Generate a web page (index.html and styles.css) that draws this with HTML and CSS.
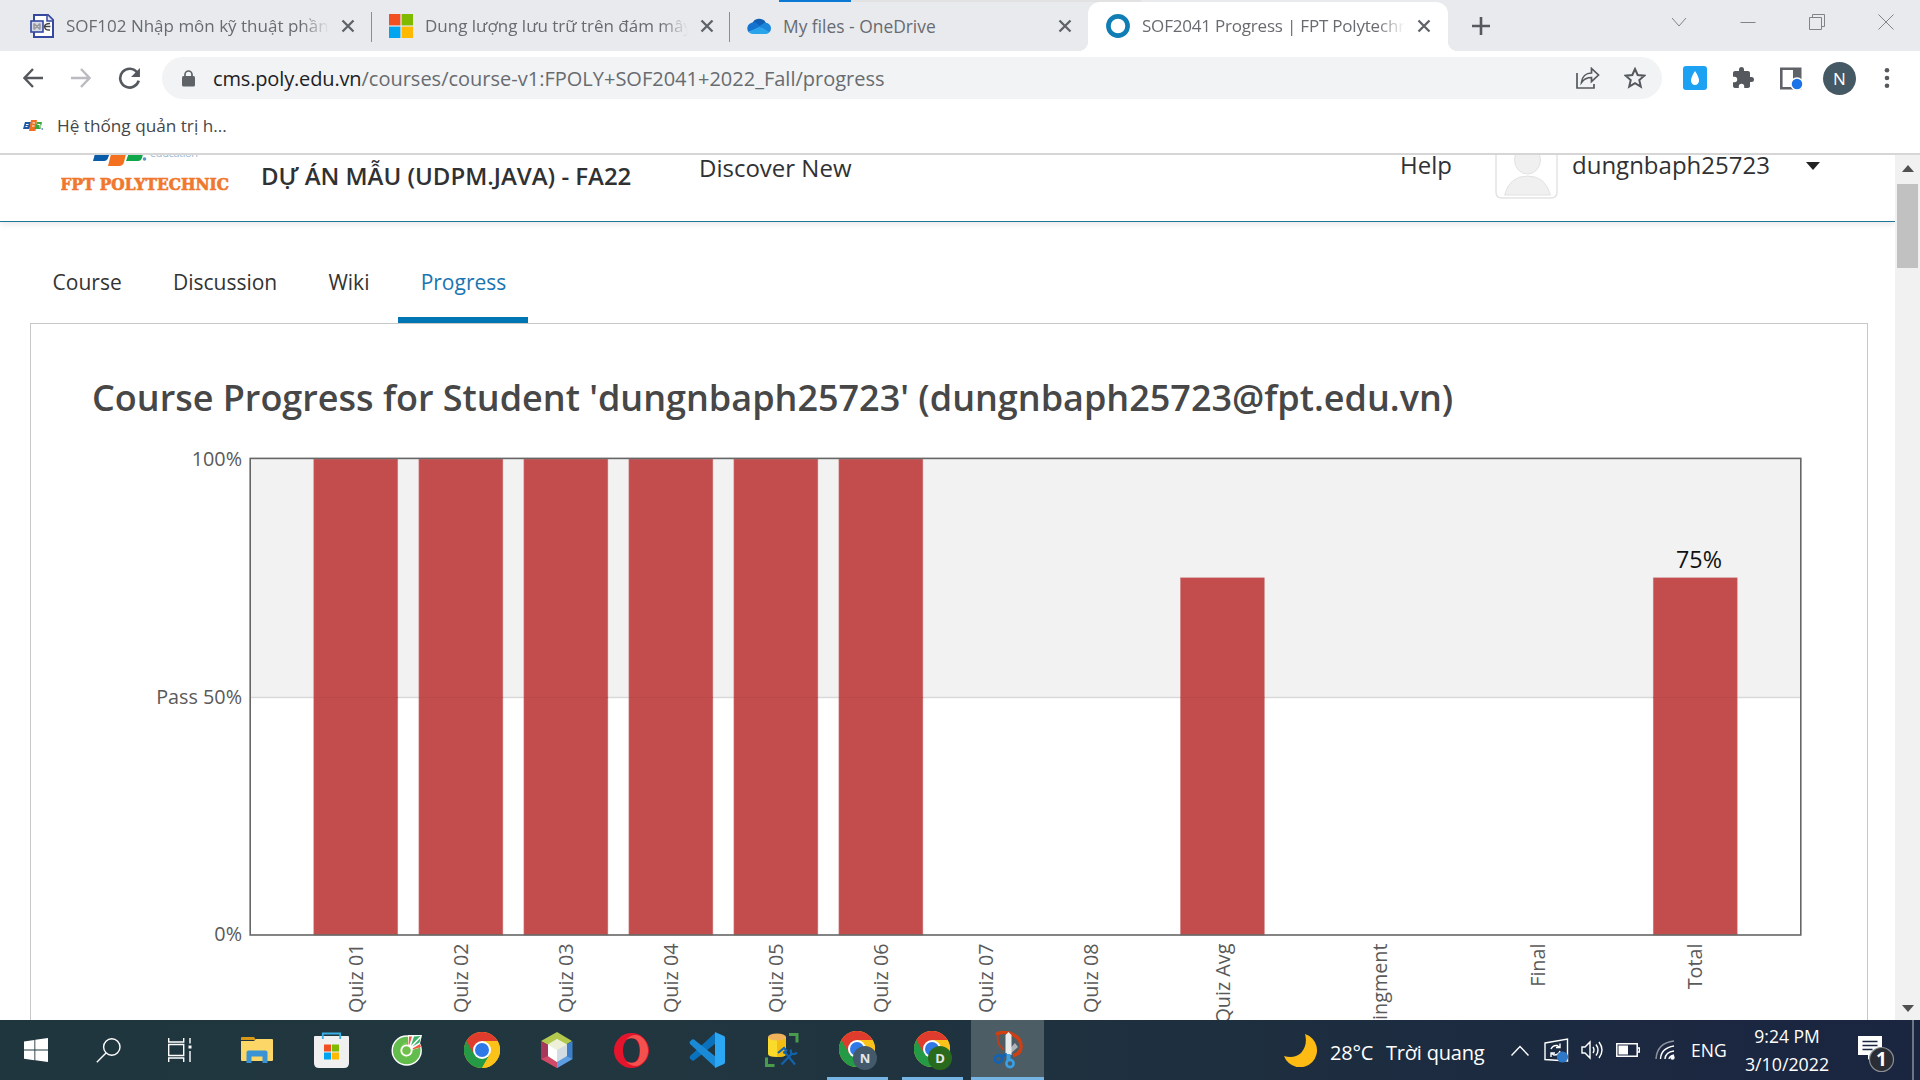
FILE: index.html
```html
<!DOCTYPE html>
<html lang="vi">
<head>
<meta charset="utf-8">
<title>SOF2041 Progress | FPT Polytechnic</title>
<link rel="stylesheet" href="styles.css">
</head>
<body>
<svg width="0" height="0" class="defs" aria-hidden="true">
  <defs>
    <symbol id="x" viewBox="0 0 14 14"><path d="M1.5 1.5l11 11M12.500 1.500l-11 11" stroke="#5f6368" stroke-width="2.300" fill="none"/></symbol>
    <symbol id="chrome" viewBox="0 0 36 36">
      <circle cx="18" cy="18" r="18" fill="#fbc21a"/>
      <path d="M18 18 L2.400 9 A18 18 0 0 0 18 36 L26 22Z" fill="#249a46"/>
      <path d="M2.400 9 A18 18 0 0 1 33.600 9 L18 9.300 L10 22Z" fill="#e03c2e"/>
      <path d="M33.600 9H18l7.800 13.500L18 36A18 18 0 0 0 33.600 9Z" fill="#fbc21a"/>
      <circle cx="18" cy="18" r="9" fill="#fff"/><circle cx="18" cy="18" r="7" fill="#2f78e8"/>
    </symbol>
  </defs>
</svg>

<div class="tabstrip">
  <div class="progress-blue"></div><div class="progress-grey"></div>
  <div class="tab tab-a">
    <svg class="fav" viewBox="0 0 24 24"><path d="M4 1h14l5 5v17H4z" fill="#fff" stroke="#3549a0" stroke-width="2"/><path d="M17 1v6h6" fill="#dfe3f3" stroke="#3549a0" stroke-width="1.500"/><rect x="1" y="7" width="12" height="11" fill="#d5daea" stroke="#3549a0" stroke-width="1.600"/><path d="M4 9.500l6 6M10 9.500l-6 6M4 9.500v6M10 9.500v6" stroke="#999" stroke-width="1.500"/><path d="M20 9.500q-5 0-5.500 3 .5 4 5.500 3.500M14.500 12.500h6" stroke="#444" stroke-width="1.500" fill="none"/></svg>
    <span class="tab-text fade">SOF102 Nhập môn kỹ thuật phần mềm</span>
    <svg class="close"><use href="#x"/></svg>
  </div>
  <div class="tab tab-b">
    <svg class="fav" viewBox="0 0 24 24"><path fill="#f25022" d="M0 0h11.400v11.400H0z"/><path fill="#7fba00" d="M12.600 0H24v11.400H12.600z"/><path fill="#00a4ef" d="M0 12.600h11.400V24H0z"/><path fill="#ffb900" d="M12.600 12.600H24V24H12.600z"/></svg>
    <span class="tab-text fade">Dung lượng lưu trữ trên đám mây</span>
    <svg class="close"><use href="#x"/></svg>
  </div>
  <div class="tab tab-c">
    <svg class="fav" viewBox="0 0 24 24"><path d="M5 10a7.500 7.500 0 0 1 14-1l-6 6z" fill="#0f5fb5"/><path d="M5.500 8.500A6 6 0 0 0 1.500 18l13-5-5-4q-2-1-4-.500z" fill="#1373cf"/><path d="M24 14.500a5.500 5.500 0 0 0-7-5.500l-5 3.500 10 6q2-1.500 2-4z" fill="#1a86dc"/><path d="M1.500 18l11-5.200L22.500 18a5 5 0 0 1-3.500 2H6a6 6 0 0 1-4.500-2z" fill="#29a3ea"/></svg>
    <span class="tab-text">My files - OneDrive</span>
    <svg class="close"><use href="#x"/></svg>
  </div>
  <div class="tab tab-d">
    <svg class="fav" viewBox="0 0 24 24"><circle cx="12" cy="12" r="9.600" fill="#fff" stroke="#107eb4" stroke-width="4.600"/></svg>
    <span class="tab-text fade">SOF2041 Progress | FPT Polytechnic</span>
    <svg class="close"><use href="#x"/></svg>
  </div>
  <svg class="plus" viewBox="0 0 18 18"><path d="M9 0v18M0 9h18" stroke="#55595e" stroke-width="2.600"/></svg>
  <div class="winbtns">
    <svg viewBox="0 0 16 16"><path d="M1 4l7 8 7-8" /></svg>
    <svg viewBox="0 0 16 16"><path d="M0.500 8.500h15"/></svg>
    <svg viewBox="0 0 16 16"><path d="M.5 3.500h12v12H.5zM3.500 3.500v-3h12v12h-3"/></svg>
    <svg viewBox="0 0 16 16"><path d="M.5.500l15 15M15.500.500l-15 15"/></svg>
  </div>
</div>

<div class="toolbar">
  <svg class="ic back" viewBox="0 0 20 20"><path d="M20 10H2M10 1L1.500 10 10 19" fill="none" stroke="#55595e" stroke-width="2.400"/></svg>
  <svg class="ic fwd" viewBox="0 0 20 20"><path d="M0 10h18M10 1l8.500 9-8.500 9" fill="none" stroke="#b9bbbe" stroke-width="2.400"/></svg>
  <svg class="ic reload" viewBox="0 0 22 22"><path d="M18.500 5.500A9 9 0 1 0 19.800 13" fill="none" stroke="#55595e" stroke-width="2.500"/><path d="M21 1v8.500h-8.500z" fill="#55595e"/></svg>
  <div class="omnibox">
    <svg class="lock" viewBox="0 0 13 16"><rect y="5.500" width="13" height="10.500" rx="1.500" fill="#5f6368"/><path d="M3 6V4a3.500 3.500 0 0 1 7 0v2" fill="none" stroke="#5f6368" stroke-width="1.700"/></svg>
    <span class="url"><span class="host">cms.poly.edu.vn</span><span>/courses/course-v1:FPOLY+SOF2041+2022_Fall/progress</span></span>
    <svg class="share" viewBox="0 0 24 22"><path d="M1 6v15h17v-4" fill="none" stroke="#55595e" stroke-width="1.700"/><path d="M5.500 15.500C6 9.500 10 6 15.500 6V1.500L22.500 8l-7 6.500V10.500C11 10.500 8 12 5.500 15.500z" fill="none" stroke="#55595e" stroke-width="1.700"/></svg>
    <svg class="star" viewBox="0 0 22 22"><path d="M11 2l2.700 6 6.600.700-5 4.400 1.500 6.500L11 16.200l-5.800 3.400 1.500-6.500-5-4.400L8.300 8z" fill="none" stroke="#55595e" stroke-width="2"/></svg>
  </div>
  <svg class="drop" viewBox="0 0 24 24"><rect width="24" height="24" rx="3" fill="#1da1f2"/><path d="M12 5q4 6 4 9.500a4 4.500 0 0 1-8 0Q8 11 12 5z" fill="#fff"/></svg>
  <svg class="puzzle" viewBox="0 0 24 24"><path d="M20.500 11H19V7c0-1.100-.9-2-2-2h-4V3.500a2.500 2.500 0 0 0-5 0V5H4c-1.100 0-2 .9-2 2v3.800h1.500a2.700 2.700 0 0 1 0 5.400H2V20c0 1.100.9 2 2 2h3.800v-1.500a2.700 2.700 0 0 1 5.400 0V22H17c1.100 0 2-.9 2-2v-4h1.500a2.500 2.500 0 0 0 0-5z" fill="#55595e"/></svg>
  <svg class="side" viewBox="0 0 23 22"><path d="M1.300 1.300h18.900v19.400H1.300z" fill="#fff" stroke="#5f6368" stroke-width="2.600"/><path d="M13 1h8v12h-8z" fill="#5f6368"/><circle cx="17" cy="16.500" r="6" fill="#1a73e8" stroke="#fff" stroke-width="1.500"/></svg>
  <div class="avatar-n">N</div>
  <svg class="dots" viewBox="0 0 6 20"><circle cx="3" cy="2.300" r="2.300"/><circle cx="3" cy="10" r="2.300"/><circle cx="3" cy="17.700" r="2.300"/></svg>
</div>

<div class="bookmarks">
  <svg class="bm" viewBox="0 0 20 12"><path d="M2 2h6l-1.500 7H0z" fill="#1d5aa8"/><path d="M8 0h6l-1.500 11H6z" fill="#f36f21"/><path d="M14 2h5l-1.500 7h-6z" fill="#3aa63f"/><path d="M3 4.500h2.500M2.500 6.500h2M9.500 3h2.500M9 6h2.500M14.500 4.500h2.500v3" stroke="#fff" stroke-width="1" fill="none"/><circle cx="19.200" cy="9" r=".8" fill="#1d5aa8"/></svg>
  <span class="bm-text">Hệ thống quản trị h...</span>
</div>

<div class="viewport">
  <div class="page">
    <header class="site-header">
      <svg class="logo" viewBox="61 155 169 40"><path d="M96 150h15l-3 8q-1 3-4 3H93z" fill="#0a5ba8"/><path d="M112 150h15l-3 12q-1 4-5 4h-11z" fill="#f3701f"/><path d="M130 150h14l-2 8q-1 3-4 3h-12z" fill="#10a64a"/><circle cx="144.500" cy="159" r="1.800" fill="#5d93c8"/><text x="150" y="156.500" class="edu" textLength="48">education</text><text x="60.500" y="189.500" class="poly" textLength="168.500" lengthAdjust="spacingAndGlyphs">FPT POLYTECHNIC</text></svg>
      <span class="course-name">DỰ ÁN MẪU (UDPM.JAVA) - FA22</span>
      <span class="discover">Discover New</span>
      <span class="help">Help</span>
      <svg class="user-pic" viewBox="0 0 64 46"><path d="M1 0v37q0 6 6 6h49q6 0 6-6V0" fill="#fff" stroke="#e3e3e3" stroke-width="1.500"/><ellipse cx="32.500" cy="5" rx="13" ry="14" fill="#f0f0f0" stroke="#e2e2e2"/><path d="M9.500 40q5-19 23-19t23 19z" fill="#f0f0f0" stroke="#e2e2e2"/></svg>
      <span class="username">dungnbaph25723</span>
      <svg class="caret" viewBox="0 0 14 8"><path d="M0 0h14L7 8z" fill="#222"/></svg>
    </header>
    <nav class="course-nav">
      <a>Course</a><a>Discussion</a><a>Wiki</a><a class="on">Progress</a>
    </nav>
    <main class="panel">
      <h1>Course Progress for Student 'dungnbaph25723' (dungnbaph25723@fpt.edu.vn)</h1>
      <svg class="chart" viewBox="31 420 1836 600">
        <rect x="251" y="459" width="1549" height="238" fill="#f2f2f2"/>
        <path d="M251 697.500h1549" stroke="#d9d9d9" stroke-width="1.500"/>
        <g class="bars">
          <rect x="313.800" y="459" width="84" height="476"/><rect x="418.900" y="459" width="84" height="476"/><rect x="523.900" y="459" width="84" height="476"/><rect x="628.900" y="459" width="84" height="476"/><rect x="733.900" y="459" width="84" height="476"/><rect x="838.900" y="459" width="84" height="476"/><rect x="1180.400" y="577.800" width="84" height="357.200"/><rect x="1653.200" y="577.800" width="84" height="357.200"/>
        </g>
        <path d="M314 697.500h84M419 697.500h84M524 697.500h84M629 697.500h84M734 697.500h84M839 697.500h84M1180.500 697.500h84M1653 697.500h84" stroke="#b94a4a" stroke-width="1"/>
        <rect x="250.200" y="458.400" width="1550.600" height="476.600" class="frame"/>
        <g class="ylab"><text x="242" y="466">100%</text><text x="242" y="704">Pass 50%</text><text x="242" y="941">0%</text></g>
        <g class="xlab">
          <text transform="translate(363 943.500) rotate(-90)">Quiz 01</text><text transform="translate(468 943.500) rotate(-90)">Quiz 02</text><text transform="translate(573 943.500) rotate(-90)">Quiz 03</text><text transform="translate(678 943.500) rotate(-90)">Quiz 04</text><text transform="translate(783 943.500) rotate(-90)">Quiz 05</text><text transform="translate(888 943.500) rotate(-90)">Quiz 06</text><text transform="translate(993 943.500) rotate(-90)">Quiz 07</text><text transform="translate(1098 943.500) rotate(-90)">Quiz 08</text><text transform="translate(1230 943.500) rotate(-90)">Quiz Avg</text><text transform="translate(1387 943.500) rotate(-90)">Assingment</text><text transform="translate(1545 943.500) rotate(-90)">Final</text><text transform="translate(1702 943.500) rotate(-90)">Total</text>
        </g>
        <text x="1699" y="568" class="total">75%</text>
      </svg>
    </main>
  </div>
  <div class="scrollbar">
    <svg viewBox="0 0 12 7"><path d="M0 7h12L6 0z"/></svg>
    <div class="thumb"></div>
    <svg class="down" viewBox="0 0 12 7"><path d="M0 0h12L6 7z"/></svg>
  </div>
</div>

<div class="taskbar">
  <div class="tb sys"><svg width="24" height="24" viewBox="0 0 24 24"><path fill="#fff" d="M0 3.400l10.400-1.500v9.600H0zM11.300 1.700L24 0v11.500H11.300zM0 12.500h10.400v9.700L0 20.700zM11.300 12.500H24V24l-12.700-1.700z"/></svg></div>
  <div class="tb sys"><svg width="25" height="25" viewBox="0 0 25 25" class="line"><circle cx="15.800" cy="9" r="8.200"/><path d="M10 15L.8 24.200"/></svg></div>
  <div class="tb sys"><svg width="24" height="24" viewBox="0 0 24 24" class="line"><path d="M.7 0v4h15V0M.7 24v-4h15v4M.7 6.500h15v11H.7zM22 0v5.500M22 13v11"/><path d="M20.500 7.500h3v3h-3z" fill="#fff" stroke="none"/></svg></div>
  <div class="tb gap"><svg width="32" height="28" viewBox="0 0 32 28"><path d="M0 2q0-1 1-1h12l2 3H0z" fill="#d79a18"/><path d="M0 5h13l2-2h16q1 0 1 1v20q0 1-1 1H1q-1 0-1-1z" fill="#fcd667"/><path d="M5.500 27V16.500q0-2 2-2h17q2 0 2 2V27h-5v-6.500h-11V27z" fill="#3a93d4"/></svg></div>
  <div class="tb"><svg width="35" height="36" viewBox="0 0 35 36"><path d="M8.800 7V1.500h17.400V7" fill="none" stroke="#38b0e3" stroke-width="1.800"/><path d="M0 5q0-1 1-1h33q1 0 1 1v26q0 5-5 5H5q-5 0-5-5z" fill="#f0f0f1"/><path d="M8.800 4v3M26.200 4v3" stroke="#38b0e3" stroke-width="1.800"/><path fill="#f25022" d="M10 12.500h7v7h-7z"/><path fill="#7fba00" d="M18 12.500h7v7h-7z"/><path fill="#00a4ef" d="M10 20.500h7v7h-7z"/><path fill="#ffb900" d="M18 20.500h7v7h-7z"/></svg></div>
  <div class="tb"><svg width="32" height="32" viewBox="0 0 32 32"><circle cx="15.700" cy="16.500" r="14.500" fill="#62bd4c" stroke="#fff" stroke-width="1.400"/><path d="M17 14V1h14l-3 13-7 2z" fill="#fff"/><path d="M18 2.500h3l-2.500 8h-1zM29 10l1 3-8 2.500-.5-1z" fill="#ee5a42"/><path d="M23 2.500l6.500-.5L20 11.500zM29.500 4l-1 4.500-7 4z" fill="#3db266"/><path d="M16 24a8 8 0 0 1-7-8 8 8 0 0 1 7-8" fill="#7cc850"/><circle cx="15.500" cy="16.500" r="5.200" fill="#6fbf4a" stroke="#fff" stroke-width="1.800"/></svg></div>
  <div class="tb"><svg width="36" height="36"><use href="#chrome"/></svg></div>
  <div class="tb"><svg width="32" height="36" viewBox="0 0 32 36"><path d="M16 0l15 9-15 9L0 9z" fill="#b2c94d"/><path d="M0 9v18l16 9V18z" fill="#a8375a"/><path d="M31.500 9v18L16 36V18z" fill="#3c7fc9"/><path d="M0 27l16 9v-7l-9-5z" fill="#d24a68"/><path d="M31.500 27L16 36v-7l9-5z" fill="#5e9ee0"/><path d="M16 7l10 5.500V24l-10 6-9-6V12.500z" fill="#d3dce2"/><path d="M16 7l10 5.500L16 18l-9-5.500z" fill="#eef1d8"/><path d="M7 12.500L16 18v12l-9-6z" fill="#fff"/></svg></div>
  <div class="tb wide"><svg width="35" height="35" viewBox="0 0 35 35"><path fill-rule="evenodd" fill="#e3142c" d="M17.500 0a17.500 17.500 0 1 0 0 35 17.500 17.500 0 0 0 0-35zm0 5c5 0 8 5.500 8 12.500S22.500 30 17.500 30 9 24.500 9 17.500 12.500 5 17.500 5z"/><path d="M12 6.500Q19 0 26 3a17 17 0 0 1 0 29q-7 3-14-3.500 14 5 14-11T12 6.500z" fill="#f4504e"/></svg></div>
  <div class="tb"><svg width="36" height="36" viewBox="0 0 36 36"><path d="M27 0L1 24q-1 1.500 0 2.500l2 2q1 .5 2 0L27 11z" fill="#0a72bd"/><path d="M27 36L1 12q-1-1.500 0-2.500l2-2q1-.5 2 0L27 25z" fill="#1a8ad6"/><path d="M26 0l9 4q1 .5 1 2v24q0 1.500-1 2l-9 4z" fill="#2ba7f4"/></svg></div>
  <div class="tb"><svg width="34" height="34" viewBox="0 0 34 34"><path d="M3 4v17q0 3 9 3t9-3V4z" fill="#fadb2c"/><path d="M12 5h9v16q0 3-9 3z" fill="#f2bd12"/><ellipse cx="12" cy="4" rx="9" ry="3.500" fill="#f0b35c"/><path d="M24 1.500h8v8M1.500 24.500v8h8" fill="none" stroke="#4a9c4d" stroke-width="3"/><path d="M16.500 31.500l11-11.500M19 18l11 13.500" stroke="#1263ad" stroke-width="2.200" fill="none"/><path d="M13 20l6-5 2.500 2.500-3 3M26 16.500q-1 4 1.500 4.500t4.500-1.500" stroke="#1263ad" stroke-width="2.200" fill="none"/></svg></div>
  <div class="tb run"><svg width="40" height="40" viewBox="-1 0 40 40"><use href="#chrome" width="36" height="36"/><circle cx="26" cy="27" r="12" fill="#44596a"/><text x="26" y="32" class="badge">N</text></svg></div>
  <div class="tb run"><svg width="40" height="40" viewBox="-1 0 40 40"><use href="#chrome" width="36" height="36"/><circle cx="26" cy="27" r="12" fill="#2a6a1d"/><text x="26" y="32" class="badge">D</text></svg></div>
  <div class="tb run active"><svg width="30" height="38" viewBox="0 0 30 38"><path d="M3 3.500q6-3.500 13-1.500 12 4 12 13 0 8-8 9.500" fill="none" stroke="#d03f12" stroke-width="3.500"/><path d="M5 4q-2 9 6 15" fill="none" stroke="#b8401c" stroke-width="2"/><path d="M22 12l3 4-10 9-3-2z" fill="#aeb4b8"/><path d="M12.500 4l3-3 3 3v20h-6z" fill="#e9ebec"/><circle cx="5.500" cy="28" r="3.600" fill="none" stroke="#1263b5" stroke-width="2.600"/><circle cx="17" cy="32.500" r="3.600" fill="none" stroke="#3aa0e6" stroke-width="2.600"/><path d="M8 26l6-3" stroke="#1263b5" stroke-width="3"/><path d="M15.500 23v7" stroke="#3aa0e6" stroke-width="4"/></svg></div>
  <div class="tray">
    <svg class="moon" viewBox="0 0 33 33"><path d="M21 0A17 17 0 1 1 0 22Q10 25 17 19 24 11 21 0z" fill="#fdbb13"/></svg>
    <span class="temp">28°C</span><span class="weather">Trời quang</span>
    <svg class="chev line" viewBox="0 0 18 11"><path d="M.5 10.500L9 1.500l8.500 9"/></svg>
    <svg class="sync line" viewBox="0 0 25 25"><path d="M1 5L23.500 1v22L1 21.500z"/><path d="M7 11q2-4 6-3.500l3 2M16 5.500v4h-4M16 13q-1 4-6 4l-3-2M7 19v-4h4"/><circle cx="18.500" cy="19" r="5.600" fill="#2f78c8" stroke="none"/></svg>
    <svg class="spk line" viewBox="0 0 23 20"><path d="M1 7h3l5-5v16l-5-5H1zM12 7q2 3 0 6M15 4.500q4 5.500 0 11M18 2q6 8 0 16"/></svg>
    <svg class="bat" viewBox="0 0 24 14"><path d="M.8.800h20.400v12.400H.8zM22 5h1.500v4H22" fill="none" stroke="#fff" stroke-width="1.500"/><path d="M2.500 2.500H12v9H2.500z" fill="#fff"/></svg>
    <svg class="wifi line" viewBox="0 0 20 20"><path d="M1 19Q2 3 19 1" opacity=".5"/><path d="M5.500 19Q6 8 19 6M10 19q.5-7 9-8M14 19q.5-3 5-4"/><circle cx="17.500" cy="17.500" r="1.500" fill="#fff"/></svg>
    <span class="lang">ENG</span>
    <div class="clock"><span>9:24 PM</span><span class="date">3/10/2022</span></div>
    <svg class="notif" viewBox="0 0 38 38"><path d="M1 1h24v19H15l-4 5v-5H1z" fill="#fff"/><path d="M5.500 6.500h15M5.500 10.500h15M5.500 14.500h10" stroke="#1b2740" stroke-width="1.400"/><circle cx="24.500" cy="24.500" r="12" fill="#2a2d33" stroke="#8b8f96" stroke-width="1.200"/><text x="24.500" y="31" class="one">1</text></svg>
    <div class="peek"></div>
  </div>
</div>
</body>
</html>
```
FILE: styles.css
```css
* { box-sizing: border-box; }
body { margin: 0; width: 1920px; height: 1080px; overflow: hidden; background: #fff; font-family: "Open Sans", "Noto Sans", sans-serif; color: #333; display: flex; flex-direction: column; }
svg { display: block; flex: none; }
span, a { white-space: pre; }
.defs { position: absolute; }

.tabstrip { position: relative; height: 51px; background: #e8eaed; display: flex; align-items: center; flex: none; }
.progress-blue { position: absolute; left: 779px; top: 0; width: 72px; height: 2px; background: #0a78d4; }
.progress-grey { position: absolute; left: 851px; top: 0; width: 290px; height: 2px; background: #e2e2e2; }
.tab { display: flex; align-items: center; height: 100%; position: relative; }
.tab-a { width: 372px; padding-left: 30px; }
.tab-b { width: 358px; padding-left: 17px; }
.tab-c { width: 358px; padding-left: 17px; }
.tab-d { width: 360px; height: 49px; margin-top: 2px; padding: 0 0 2px 18px; background: #fff; border-radius: 12px 12px 0 0; }
.tab-a::after, .tab-b::after { content: ""; position: absolute; right: 0; top: 12px; width: 1px; height: 30px; background: #8a8d91; }
.tab-d::before, .tab-d::after { content: ""; position: absolute; bottom: 0; width: 10px; height: 10px; }
.tab-d::before { left: -10px; background: radial-gradient(circle at 0 0, transparent 10px, #fff 10.5px); }
.tab-d::after { right: -10px; background: radial-gradient(circle at 100% 0, transparent 10px, #fff 10.5px); }
.fav { width: 24px; height: 24px; }
.tab-text { margin-left: 12px; width: 263px; overflow: hidden; font-size: 17px; line-height: 30px; color: #686b70; }
.fade { -webkit-mask-image: linear-gradient(90deg, #000 235px, transparent 263px); mask-image: linear-gradient(90deg, #000 235px, transparent 263px); }
.close { width: 14px; height: 14px; margin-left: 12px; }
.tab-c .tab-text { font-size: 17.4px; }
.tab-d .tab-text { letter-spacing: -0.2px; }
.plus { width: 18px; height: 18px; margin-left: 23.5px; }
.winbtns { margin-left: auto; display: flex; gap: 53px; padding: 0 26px 8px 0; }
.winbtns svg { width: 16px; height: 16px; fill: none; stroke: #808388; stroke-width: 1; }

.toolbar { height: 51px; display: flex; align-items: center; flex: none; padding: 3px 0 0 23px; }
.ic { width: 20px; height: 20px; }
.fwd { margin-left: 28px; }
.reload { width: 23px; height: 23px; margin-left: 26.5px; }
.omnibox { width: 1500px; height: 42px; border-radius: 21px; background: #f1f3f4; margin-left: 21.5px; display: flex; align-items: center; padding-left: 20px; }
.lock { width: 13px; height: 17px; }
.url { margin-left: 18px; padding-top: 1px; font-size: 20px; line-height: 40px; color: #686b70; width: 1363px; display: flex; }
.host { color: #202124; letter-spacing: -0.15px; }
.share { width: 24px; height: 22px; }
.star { width: 22px; height: 22px; margin-left: 24px; }
.drop { width: 24px; height: 24px; margin-left: 21px; }
.puzzle { width: 24px; height: 24px; margin-left: 24px; }
.side { width: 23px; height: 23px; margin-left: 25px; }
.avatar-n { width: 33px; height: 33px; border-radius: 50%; background: #445964; color: #fff; font-size: 17px; line-height: 33px; text-align: center; margin-left: 20px; }
.dots { width: 6px; height: 20px; margin-left: 28px; fill: #55595e; }

.bookmarks { height: 53px; border-bottom: 2px solid #d6d6d6; display: flex; align-items: center; padding: 0 0 4px 23px; flex: none; }
.bm { width: 20px; height: 12px; }
.bm-text { margin-left: 14px; font-size: 17.2px; line-height: 40px; color: #44474a; }

.viewport { height: 865px; display: flex; overflow: hidden; flex: none; }
.page { width: 1895px; display: flex; flex-direction: column; }
.site-header { height: 67px; border-bottom: 1px solid #1e7696; box-shadow: 0 2px 7px rgba(0,0,0,.1); display: flex; align-items: flex-start; padding-left: 61px; font-size: 24px; flex: none; color: #303133; }
.logo { width: 169px; height: 40px; }
.edu { font-size: 11px; fill: #9bb6d2; }
.poly { font-family: "DejaVu Serif", serif; font-weight: 700; font-size: 17px; fill: #f0782e; stroke: #f0782e; stroke-width: .7; }
.course-name { margin-left: 31px; line-height: 41px; font-weight: 600; width: 438px; letter-spacing: -0.02px; }
.discover { line-height: 26px; width: 701px; }
.help { line-height: 19px; width: 95px; }
.user-pic { width: 64px; height: 46px; }
.username { margin-left: 13px; line-height: 19px; width: 234px; }
.caret { width: 14px; height: 8px; margin-top: 7px; }
.course-nav { height: 101px; padding-left: 29.6px; display: flex; gap: 5.2px; flex: none; }
.course-nav a { padding: 40px 23px 0; font-size: 21px; line-height: 40px; border-bottom: 6px solid transparent; }
.course-nav .on { color: #1a75b0; border-color: #0075b4; padding-right: 22px; }
.panel { margin-left: 30px; width: 1838px; height: 800px; border: 1px solid #c8c8c8; flex: none; }
h1 { margin: 0; padding: 51px 0 0 61px; height: 96px; font-size: 36px; line-height: 45px; font-weight: 600; color: #474747; white-space: pre; letter-spacing: -0.01px; }
.chart { width: 1836px; height: 600px; }
.bars { fill: #c34c4d; stroke: #d08a8a; stroke-width: .5; }
.frame { fill: none; stroke: #666; stroke-width: 1.6; }
.ylab, .xlab { font-size: 19.8px; fill: #5a5a5a; text-anchor: end; }
.total { font-size: 23.3px; fill: #111; text-anchor: middle; }
.scrollbar { width: 25px; background: #f1f1f1; display: flex; flex-direction: column; align-items: center; padding: 10px 0 8px; }
.scrollbar svg { width: 12px; height: 7px; fill: #505050; }
.thumb { width: 21px; height: 84px; margin-top: 12px; background: #c1c1c1; }
.scrollbar .down { margin-top: auto; }

.taskbar { height: 60px; flex: none; display: flex; background: linear-gradient(90deg, #20363f 0%, #21363f 35%, #1e303f 60%, #1c2a40 80%, #1a2540 100%); color: #fff; }
.line { fill: none; stroke: #fff; stroke-width: 1.4; }
.tb { width: 75px; height: 60px; display: flex; align-items: center; justify-content: center; position: relative; flex: none; }
.sys { width: 72px; }
.gap { margin-left: 3px; }
.run svg { margin: 2px 0 0 2px; }
.run::after { content: ""; position: absolute; bottom: 0; left: 8px; width: 61px; height: 3px; background: #76b4e4; }
.active { background: #4d5d66; width: 73px; margin-left: 2px; }
.active svg { margin: 0; }
.active::after { left: 0; width: 73px; }
.badge { font-size: 13px; font-weight: 700; fill: #e4e8ea; text-anchor: middle; }
.tray { margin-left: auto; width: 636px; display: flex; align-items: center; }
.moon { width: 33px; height: 33px; }
.temp { margin-left: 13px; width: 56px; font-size: 20px; line-height: 30px; margin-top: 5px; letter-spacing: -0.2px; }
.weather { width: 125px; font-size: 20px; line-height: 30px; margin-top: 5px; letter-spacing: -0.2px; }
.chev { width: 18px; height: 11px; }
.sync { width: 25px; height: 25px; margin-left: 15px; }
.spk { width: 23px; height: 20px; margin-left: 12px; }
.bat { width: 24px; height: 14px; margin-left: 12px; }
.wifi { width: 20px; height: 20px; margin-left: 15px; }
.lang { margin-left: 16px; width: 54px; font-size: 17.5px; line-height: 30px; }
.clock { width: 84px; display: flex; flex-direction: column; align-items: center; font-size: 17.5px; line-height: 28px; padding-bottom: 1px; }
.date { font-size: 17.8px; }
.notif { width: 38px; height: 38px; margin: 8px 0 0 28px; }
.one { font-size: 19px; font-weight: 700; fill: #fff; text-anchor: middle; }
.peek { width: 2px; height: 60px; background: #6d7585; margin-left: auto; margin-right: 6px; }
```
